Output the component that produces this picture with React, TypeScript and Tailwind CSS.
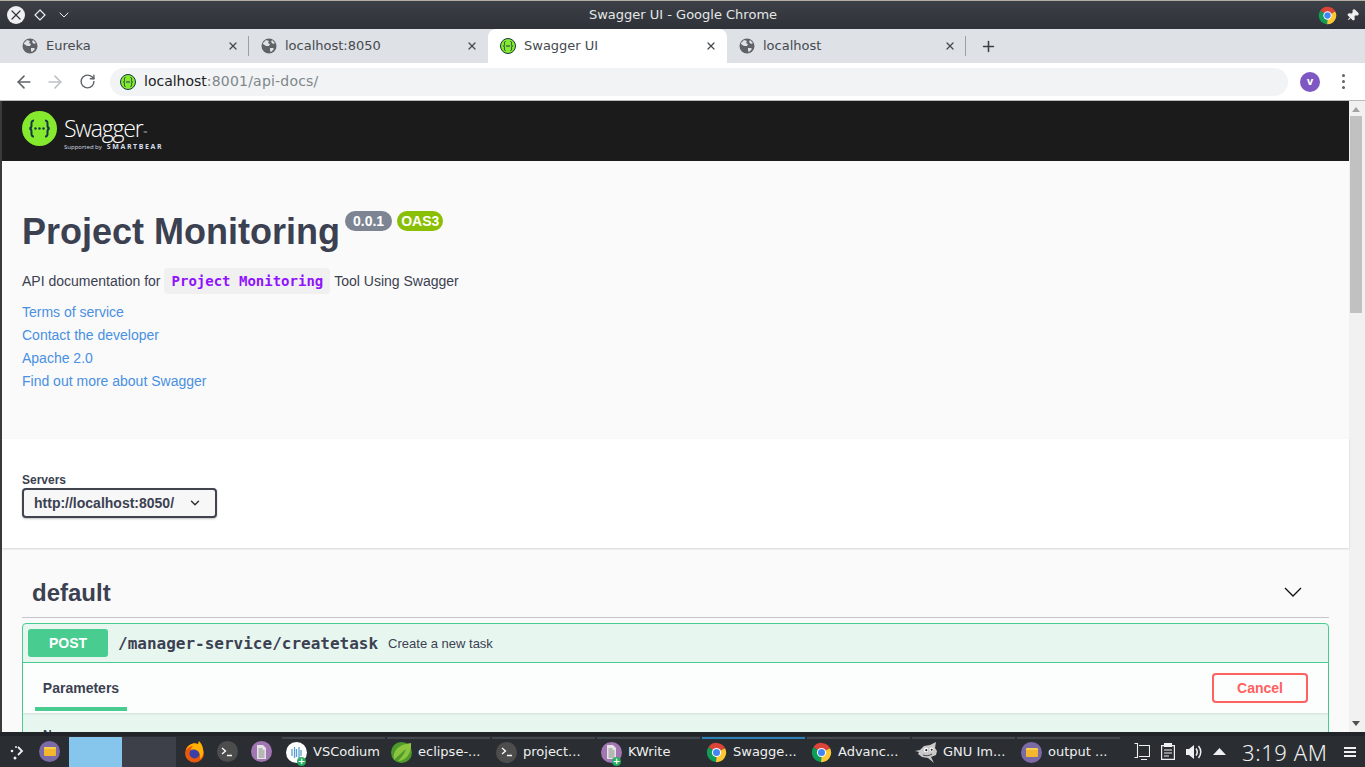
import React from 'react';
import { ArrowLeft, ArrowRight, RotateCw, X, Plus, ChevronDown, Pin } from 'lucide-react';

const Globe = () => (
  <svg width="16" height="16" viewBox="0 0 16 16" className="shrink-0">
    <circle cx="8" cy="8" r="7.5" fill="#5f6368" />
    <path d="M2 5l3-3 3 1-1 2 2 1-1 2H5L2 6zM9 10h3l1 1-3 3-1-1zM11 2l3 3-2 1-2-2z" fill="#dee1e6" />
  </svg>
);

const SwaggerFav = ({ size = 16 }: { size?: number }) => (
  <svg width={size} height={size} viewBox="0 0 16 16" className="shrink-0">
    <circle cx="8" cy="8" r="7.5" fill="#85ea2d" stroke="#173647" strokeWidth="1" />
    <path d="M5.500 3.500C4 3.500 4.500 5 4.500 6.500S3.500 8 3.500 8s1 0 1 1.500S4 12.500 5.500 12.500M10.500 3.500C12 3.500 11.500 5 11.500 6.500S12.500 8 12.500 8s-1 0-1 1.500 .5 3-1 3M6 8h4" fill="none" stroke="#173647" strokeWidth="1" />
  </svg>
);

const ChromeIcon = ({ size = 20 }: { size?: number }) => (
  <svg width={size} height={size} viewBox="0 0 48 48" className="shrink-0">
    <path d="M24 24L5.540 12.030A22 22 0 0 1 43.600 14Z" fill="#db4437" />
    <path d="M24 24L43.600 14A22 22 0 0 1 22.860 45.970Z" fill="#fcc934" />
    <path d="M24 24L22.860 45.970A22 22 0 0 1 5.540 12.030Z" fill="#0f9d58" />
    <circle cx="24" cy="24" r="10.500" fill="#fff" />
    <circle cx="24" cy="24" r="8" fill="#4285f4" />
  </svg>
);

const Tab = ({ title, active, sep, icon }: { title: string; active?: boolean; sep?: boolean; icon: React.ReactNode }) => (
  <div className={`relative flex h-[34px] w-[239px] shrink-0 items-center pl-[12px] pr-[8px] ${active ? 'rounded-t-[8px] bg-white' : ''}`}>
    {icon}
    <span className="ml-[8px] flex-1 text-[13px] text-[#45494e]">{title}</span>
    <X size={12} strokeWidth={2.500} className="mr-[2px] text-[#45494e]" />
    {sep && <div className="absolute right-0 top-[7px] h-[20px] w-px bg-[#9aa0a6]" />}
  </div>
);

const TitleBar = () => (
  <div className="flex h-[29px] shrink-0 items-center border-t border-t-[#b5aca4] bg-gradient-to-b from-[#3c4047] to-[#2e3238] pl-[7px] pr-[6px]">
    <div className="flex h-[18px] w-[18px] items-center justify-center rounded-full bg-[#eff0f1]">
      <X size={16} strokeWidth={1.800} className="text-[#31363b]" />
    </div>
    <svg width="14" height="14" viewBox="0 0 14 14" className="ml-[8px]">
      <path d="M7 2l5 5-5 5-5-5z" fill="none" stroke="#eff0f1" strokeWidth="1.200" />
    </svg>
    <ChevronDown size={16} strokeWidth={1.500} className="ml-[9px] text-[#eff0f1]" />
    <div className="flex-1 pr-[24px] text-center text-[13px] text-[#e4e6e8] [font-family:'DejaVu_Sans',sans-serif]">Swagger UI - Google Chrome</div>
    <ChromeIcon size={19} />
    <Pin size={13} fill="#eff0f1" className="ml-[9px] rotate-45 text-[#eff0f1]" />
  </div>
);

const TabStrip = () => (
  <div className="flex h-[34px] shrink-0 items-center bg-[#dee1e6] pl-[10px]">
    <Tab title="Eureka" sep icon={<Globe />} />
    <Tab title="localhost:8050" icon={<Globe />} />
    <Tab title="Swagger UI" active icon={<SwaggerFav />} />
    <Tab title="localhost" sep icon={<Globe />} />
    <Plus size={17} strokeWidth={2.200} className="ml-[14px] text-[#3c4043]" />
  </div>
);

const Toolbar = () => (
  <div className="flex h-[38px] shrink-0 items-center border-b border-b-[#b9babc] bg-white pl-[14px] pr-[20px]">
    <ArrowLeft size={20} strokeWidth={1.900} className="text-[#5f6368]" />
    <ArrowRight size={20} strokeWidth={1.900} className="ml-[11px] text-[#bdc1c6]" />
    <RotateCw size={17} strokeWidth={2} className="ml-[14px] text-[#5f6368]" />
    <div className="ml-[14px] flex h-[28px] flex-1 items-center rounded-full bg-[#f1f3f4] pl-[10px] text-[14px]">
      <SwaggerFav />
      <span className="ml-[8px] text-[#202124]">localhost</span>
      <span className="tracking-[0.2px] text-[#80868b]">:8001/api-docs/</span>
    </div>
    <div className="ml-[12px] flex h-[20px] w-[20px] items-center justify-center rounded-full bg-[#7e57c2] text-[10px] font-bold text-white">v</div>
    <div className="ml-[22px] flex flex-col gap-[3px]">
      <span className="h-[3px] w-[3px] rounded-full bg-[#5f6368]" />
      <span className="h-[3px] w-[3px] rounded-full bg-[#5f6368]" />
      <span className="h-[3px] w-[3px] rounded-full bg-[#5f6368]" />
    </div>
  </div>
);

const SwaggerHeader = () => (
  <div className="flex h-[60px] shrink-0 items-center bg-[#1b1b1b] pl-[20px]">
    <svg width="35" height="35" viewBox="0 0 35 35" className="mb-[5px]">
      <circle cx="17.500" cy="17.500" r="17.500" fill="#85ea2d" />
      <path d="M12 9.500c-3 0-2.500 2.500-2.500 5s-2 3-2 3 2 .5 2 3-.5 5 2.500 5M23 9.500c3 0 2.500 2.500 2.500 5s2 3 2 3-2 .5-2 3 .5 5-2.500 5" fill="none" stroke="#173647" strokeWidth="2" />
      <circle cx="13.500" cy="17.500" r="1.200" fill="#173647" />
      <circle cx="17.500" cy="17.500" r="1.200" fill="#173647" />
      <circle cx="21.500" cy="17.500" r="1.200" fill="#173647" />
    </svg>
    <div className="ml-[7px] flex flex-col pt-[3px] text-white [font-family:'Open_Sans',sans-serif]">
      <div className="flex h-[28px] items-end text-[23px] font-light leading-[28px] tracking-[-1.200px]">Swagger<span className="mb-[6px] ml-[1px] text-[5px] leading-none">™</span></div>
      <div className="flex items-center text-[#d8dde7]">
        <span className="text-[6px] leading-[10px]">Supported by</span>
        <span className="ml-[5px] text-[7px] font-bold leading-[10px] tracking-[1.600px]">SMARTBEAR</span>
      </div>
    </div>
  </div>
);

const InfoSection = () => (
  <div className="h-[278px] shrink-0 bg-[#fafafa] pl-[20px] pt-[50px] text-[14px] text-[#3b4151]">
    <div className="flex items-start">
      <h2 className="text-[36px] font-bold leading-[41px]">Project Monitoring</h2>
      <span className="ml-[5px] rounded-[57px] bg-[#7d8492] px-[8px] py-[1px] text-[14px] font-bold leading-[18px] text-[#fff]">0.0.1</span>
      <span className="ml-[5px] rounded-[57px] bg-[#89bf04] px-[4px] py-[1px] text-[14px] font-bold leading-[18px] text-white">OAS3</span>
    </div>
    <div className="mt-[15px] flex h-[28px] items-center">
      API documentation for
      <code className="ml-[3px] mr-[4px] rounded-[4px] bg-[#f0f0f0] py-[3px] pl-[8px] pr-[7px] text-[14px] font-bold leading-[20px] text-[#9012fe] [font-family:'DejaVu_Sans_Mono',monospace]">Project Monitoring</code>
      Tool Using Swagger
    </div>
    <div className="mt-[9px] flex flex-col items-start gap-[6px] leading-[17px] text-[#4990e2]">
      <span>Terms of service</span>
      <span>Contact the developer</span>
      <span>Apache 2.0</span>
      <span>Find out more about Swagger</span>
    </div>
  </div>
);

const ServersSection = () => (
  <div className="relative h-[109px] shrink-0 bg-white pl-[20px] pt-[34px] shadow-[0_1px_2px_rgba(0,0,0,0.15)]">
    <div className="text-[12px] font-bold leading-[14px] text-[#3b4151]">Servers</div>
    <div className="mt-[1px] flex h-[30px] w-[195px] items-center rounded-[4px] border-2 border-[#41444e] bg-[#f7f7f7] pl-[10px] text-[14px] font-bold text-[#3b4151] shadow-[0_1px_2px_rgba(0,0,0,0.25)]">
      http://localhost:8050/
      <ChevronDown size={14} strokeWidth={2.500} className="ml-[14px] text-[#303030]" />
    </div>
  </div>
);

const Operation = () => (
  <div className="mt-[5px] h-[200px] rounded-[4px] border border-[#49cc90] bg-[#e8f6f0]">
    <div className="flex h-[39px] items-center border-b border-b-[#49cc90] pl-[5px]">
      <div className="flex h-[28px] w-[80px] items-center justify-center rounded-[3px] bg-[#49cc90] text-[14px] font-bold text-white">POST</div>
      <span className="ml-[10px] mt-[1px] text-[16px] font-bold text-[#3b4151] [font-family:'DejaVu_Sans_Mono',monospace]">/manager-service/createtask</span>
      <span className="ml-[10px] mt-[1px] text-[13px] text-[#3b4151]">Create a new task</span>
    </div>
    <div className="flex h-[50px] items-start justify-between bg-[#fcfefd] pl-[12px] pr-[20px] shadow-[0_1px_2px_rgba(0,0,0,0.1)]">
      <div className="h-[48px] w-[92px] border-b-[4px] border-b-[#49cc90] pt-[16px] text-center text-[14px] font-bold leading-[18px] text-[#3b4151]">Parameters</div>
      <div className="mt-[10px] flex h-[30px] w-[96px] items-center justify-center rounded-[4px] border-2 border-[#ff6060] text-[14px] font-bold text-[#ff6060]">Cancel</div>
    </div>
    <div className="pl-[20px] pt-[15px] text-[12px] font-bold leading-[14px] text-[#3b4151]">Name</div>
  </div>
);

const OpsSection = () => (
  <div className="flex-1 overflow-hidden bg-[#fafafa] px-[20px] pt-[20px]">
    <div className="flex h-[50px] items-center justify-between border-b border-b-[#c4c6ca] pl-[10px] pr-[27px]">
      <span className="text-[24px] font-bold leading-[30px] text-[#3b4151]">default</span>
      <svg width="18" height="10" viewBox="0 0 18 10" className="mb-[2px]"><path d="M1 1l8 8 8-8" fill="none" stroke="#111" strokeWidth="1.300" /></svg>
    </div>
    <Operation />
  </div>
);

const Scrollbar = () => (
  <div className="flex w-[16px] shrink-0 flex-col items-center bg-[#f1f1f1] pr-[2px]">
    <svg width="8" height="5" viewBox="0 0 8 5" className="mt-[6px]"><path d="M4 0l4 5H0z" fill="#a3a3a3" /></svg>
    <div className="mt-[4px] h-[197px] w-[12px] bg-[#c1c1c1]" />
    <div className="flex-1" />
    <svg width="8" height="5" viewBox="0 0 8 5" className="mb-[6px]"><path d="M4 5l4-5H0z" fill="#505050" /></svg>
  </div>
);

const Circle = ({ bg, children }: { bg: string; children?: React.ReactNode }) => (
  <div className={`flex h-[21px] w-[21px] shrink-0 items-center justify-center rounded-full ${bg}`}>{children}</div>
);

const FolderGlyph = () => (
  <div className="h-[9px] w-[12px] rounded-[1px] border-t-2 border-t-[#f7d04a] bg-[#f4b62c]" />
);

const DocGlyph = () => (
  <svg width="11" height="14" viewBox="0 0 11 14"><path d="M1 0h6l3 3v11H1z" fill="#e4e4e4" /><path d="M2.500 4h4M2.500 6h6M2.500 8h6M2.500 10h6M2.500 12h6" stroke="#888" strokeWidth="1" /></svg>
);

const TermGlyph = () => (
  <svg width="12" height="10" viewBox="0 0 12 10"><path d="M1 1l3.500 3L1 7M6 8.500h5" fill="none" stroke="#fff" strokeWidth="1.300" /></svg>
);

const AddBadge = () => (
  <div className="absolute bottom-[-3px] right-[1px] flex h-[9px] w-[9px] items-center justify-center rounded-full bg-[#27ae60] text-[9px] font-bold leading-none text-white">+</div>
);

const SpringIcon = () => (
  <svg width="23" height="23" viewBox="0 0 23 23" className="shrink-0">
    <circle cx="11.500" cy="11.500" r="10.500" fill="#4f9a2d" />
    <path d="M4 19C2 10 9 3 21 2c1 10-5 18-13 18 4-4 7-8 8-12-4 3-8 7-12 11z" fill="#8cc63f" />
  </svg>
);

const GimpIcon = () => (
  <svg width="23" height="21" viewBox="0 0 23 21" className="shrink-0">
    <path d="M0 9l5-1 4-4 6-1 6-3-1 6 2 3-1 4-5 2 3 6-6-5-6-1-4-3 1-2z" fill="#c9c9c9" />
    <circle cx="11" cy="8" r="2.200" fill="#fff" />
    <circle cx="16.500" cy="7.500" r="2" fill="#fff" />
    <circle cx="11.300" cy="8.200" r="1.100" fill="#222" />
    <circle cx="16.700" cy="7.700" r="1" fill="#222" />
    <path d="M8 13c3 1 6 1 9-1" fill="none" stroke="#444" strokeWidth="1" />
  </svg>
);

const FirefoxIcon = () => (
  <svg width="21" height="22" viewBox="0 0 21 22">
    <circle cx="10.500" cy="12" r="9.500" fill="#e8590c" />
    <circle cx="10.500" cy="12.500" r="5" fill="#3d3fa8" />
    <path d="M2 9C4 3 10 1 14 3l1-3c2 2 4 5 4 9 1 4-1 8-3 9 1-4-1-8-4-9-3-1-4 0-5 0 0-2 1-3 2-4-3 0-5 2-7 4z" fill="#ffb000" />
  </svg>
);

const TaskItem = ({ label, icon, active }: { label: string; icon: React.ReactNode; active?: boolean }) => (
  <div className="flex h-full w-[103px] shrink-0 flex-col">
    <div className={`h-[2px] ${active ? 'bg-[#2a82b8]' : 'bg-[#43474e]'}`} />
    <div className="flex flex-1 items-center pb-[2px] pl-[4px] text-[13px] text-[#eff0f1]">
      <div className="relative flex w-[21px] shrink-0 items-center justify-center">{icon}</div>
      <span className="ml-[6px] whitespace-nowrap">{label}</span>
    </div>
  </div>
);

const Taskbar = () => (
  <div className="flex h-[35px] shrink-0 items-stretch border-t-[4px] border-t-[#212428] bg-[#2a2e32] text-[#eff0f1] [font-family:'DejaVu_Sans',sans-serif]">
    <div className="flex w-[33px] shrink-0 items-center justify-center">
      <svg width="16" height="16" viewBox="0 0 16 16">
        <path d="M9 3l4 4-4 4" fill="none" stroke="#eff0f1" strokeWidth="1.800" />
        <circle cx="3" cy="7" r="1.300" fill="#eff0f1" /><circle cx="7" cy="3" r="1" fill="#eff0f1" /><circle cx="6" cy="14" r="1.500" fill="#eff0f1" />
      </svg>
    </div>
    <div className="flex w-[36px] shrink-0 items-center pl-[6px]"><Circle bg="bg-[#7b6aa6]"><FolderGlyph /></Circle></div>
    <div className="mt-[1px] w-[53px] shrink-0 bg-[#87c6ec]" />
    <div className="mt-[1px] w-[54px] shrink-0 bg-[#3d4048]" />
    <div className="flex w-[34px] shrink-0 items-center justify-center pl-[2px]"><FirefoxIcon /></div>
    <div className="flex w-[34px] shrink-0 items-center justify-center"><Circle bg="bg-[#4d4d4d]"><TermGlyph /></Circle></div>
    <div className="flex w-[34px] shrink-0 items-center justify-center pl-[1px]"><Circle bg="bg-[#a275b3]"><DocGlyph /></Circle></div>
    <div className="ml-[4px] flex shrink-0 gap-[2px] pt-[1px]">
      <TaskItem label="VSCodium" icon={<><Circle bg="bg-white"><svg width="13" height="13" viewBox="0 0 13 13"><path d="M2 3v7M4.500 1v11M6.500 3v8M9 1v11M11 4v6" stroke="#5a9fd4" strokeWidth="1.300" /></svg></Circle><AddBadge /></>} />
      <TaskItem label="eclipse-..." icon={<SpringIcon />} />
      <TaskItem label="project..." icon={<Circle bg="bg-[#4d4d4d]"><TermGlyph /></Circle>} />
      <TaskItem label="KWrite" icon={<><Circle bg="bg-[#a275b3]"><DocGlyph /></Circle><AddBadge /></>} />
      <TaskItem label="Swagge..." active icon={<ChromeIcon size={21} />} />
      <TaskItem label="Advanc..." icon={<ChromeIcon size={21} />} />
      <TaskItem label="GNU Im..." icon={<GimpIcon />} />
      <TaskItem label="output ..." icon={<Circle bg="bg-[#7b6aa6]"><FolderGlyph /></Circle>} />
    </div>
    <div className="flex flex-1 items-center pl-[14px]">
      <svg width="16" height="18" viewBox="0 0 16 18" className="shrink-0"><path d="M5 2.500h10.500v11H5M.5 .5h3v14h-3M7 16.500h6" fill="none" stroke="#eff0f1" strokeWidth="1.100" /></svg>
      <svg width="14" height="17" viewBox="0 0 14 17" className="ml-[11px] shrink-0"><path d="M.6 2.600h12.800v13.800H.6zM3 7h8M3 10h8M3 13h5" fill="none" stroke="#eff0f1" strokeWidth="1.200" /><rect x="3" y="0" width="8" height="4" fill="#eff0f1" /></svg>
      <svg width="16" height="16" viewBox="0 0 16 16" className="ml-[11px] shrink-0"><path d="M0 5h3l5-4v14l-5-4H0z" fill="#eff0f1" /><path d="M10 4.500c1.500 2 1.500 5 0 7M12.500 2c3 3.500 3 8.500 0 12" fill="none" stroke="#eff0f1" strokeWidth="1.500" /></svg>
      <svg width="13" height="7" viewBox="0 0 13 7" className="ml-[11px] shrink-0"><path d="M6.500 0l6.500 7H0z" fill="#eff0f1" /></svg>
      <span className="ml-[16px] w-[85px] shrink-0 whitespace-nowrap text-[22px] font-light leading-none tracking-[0.6px] [font-family:'Noto_Sans',sans-serif]">3:19 AM</span>
      <div className="ml-[17px] flex w-[12px] shrink-0 flex-col gap-[2px]">
        <span className="h-[2px] bg-[#eff0f1]" />
        <span className="h-[2px] bg-[#eff0f1]" />
        <span className="h-[2px] bg-[#eff0f1]" />
      </div>
    </div>
  </div>
);

export default function App() {
  return (
    <div className="flex h-[767px] w-[1365px] flex-col overflow-hidden bg-white [font-family:'Liberation_Sans',Arial,sans-serif]">
      <TitleBar />
      <div className="[font-family:'DejaVu_Sans',sans-serif]">
        <TabStrip />
        <Toolbar />
      </div>
      <div className="flex min-h-0 flex-1 border-l-2 border-l-[#3a3a3a]">
        <div className="flex min-w-0 flex-1 flex-col">
          <SwaggerHeader />
          <InfoSection />
          <ServersSection />
          <OpsSection />
        </div>
        <Scrollbar />
      </div>
      <Taskbar />
    </div>
  );
}
